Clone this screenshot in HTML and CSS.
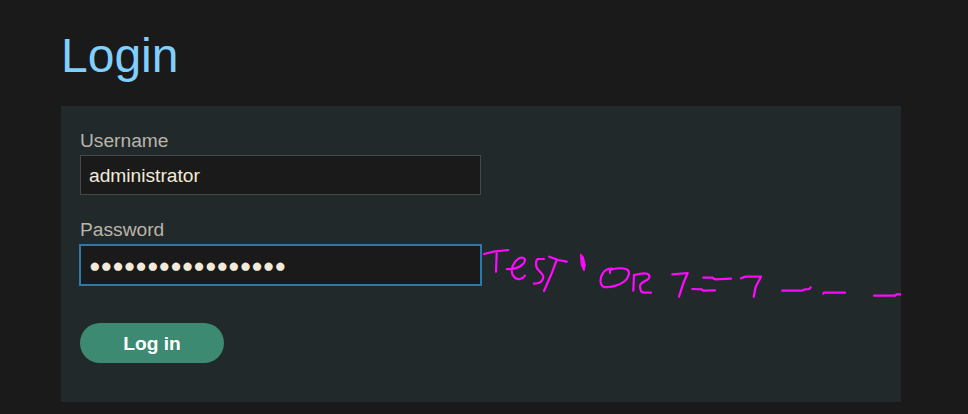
FILE: index.html
```html
<!DOCTYPE html>
<html lang="en">

<head>
    <meta charset="UTF-8">
    <meta name="viewport" content="width=device-width, initial-scale=1.0">
    <title>Login</title>
    <link rel="stylesheet" href="styles.css">
</head>

<body>
    <div class="container">
        <h1>Login</h1>
        <div class="login-box">
            <form id="login-form">
                <div class="field">
                    <label for="username">Username</label>
                    <input type="text" id="username" value="administrator">
                </div>
                <div class="field">
                    <label for="password">Password</label>
                    <input type="text" id="password" class="focused" value="●●●●●●●●●●●●●●●●●">
                </div>
                <div class="button-container">
                    <button type="button">Log in</button>
                </div>
            </form>

            <!-- handwriting on top of the form, drawn in page coordinates -->
            <svg class="scribble" viewBox="61 106 840 296" width="840" height="296" fill="none">
                <!-- T -->
                <path d="M484 254L493.3 251.7L508.3 250"/>
                <path d="M496.7 253.3L496 271.7"/>
                <!-- e -->
                <path d="M506.7 269C512 269.5 518 268 522 265C526 262 526 258 522 257.5C517 257.5 512 265 511.7 270C511.5 276 516 280 520 279C522.5 278.5 524 277 525 275.7"/>
                <!-- S -->
                <path d="M544 259L537.5 259C535.5 261 535.5 266 537.5 269C540 272 543.5 275 543.3 277C543 281 541 283.7 534 283.7"/>
                <!-- T -->
                <path d="M549.3 256.7L558.3 260L566.7 261.7"/>
                <path d="M556.7 260L551.7 273.3L544 291"/>
                <!-- quote -->
                <path class="blob" d="M580.7 254.3L583.3 256.7L585.3 265L584 271L581.3 265Z"/>
                <!-- O -->
                <path d="M610 273L610 270C616 267.5 624 268 627 269.5C631 272 628 278 625 281C620 285 610 288 604 287C599 285 600 277 603 273C605 270 609 268.5 612 268.5"/>
                <!-- R -->
                <path d="M634 275L633.3 290.7"/>
                <path d="M634 275C638 274 643 273 646 273.5C651 274.5 650 278 647 280C643 282 640 283 640 286C640 289 640.5 292.5 644 292.7L651 292.7"/>
                <!-- 7 = 7 -->
                <path d="M672.3 274.3L687.7 273L683.3 283.3L679 296.7"/>
                <path d="M703.3 277.7L712.3 277.7L715 279.3L731 278.7"/>
                <path d="M692.3 289L701.7 289.3L703.3 290.7L715 290.3"/>
                <path d="M741 278.3L745 276.7L761 276.7L755.7 286.7L753.7 296.7"/>
                <!-- dashes -->
                <path d="M782.3 290.7L801.7 290.7L805 289.3L809.3 289L810.7 287.3"/>
                <path d="M823.3 293.7L824 292.7L845 292.7"/>
                <path d="M874 295.7L895 295.7L896.7 294.3L900.7 294.3"/>
            </svg>
        </div>
    </div>
</body>

</html>
```

FILE: styles.css
```css
*{
    box-sizing: border-box;
    padding: 0;
    margin: 0;
}

body{
    background-color: #1a1a1a;
    font-family: "Liberation Sans", Arial, sans-serif;
}

.container{
    padding: 28px 67px 0 61px;
}

h1{
    font-size: 48px;
    font-weight: normal;
    line-height: 55px;
    margin-bottom: 23px;
    color: #80cfff;
}

.login-box{
    position: relative;
    height: 296px;
    padding: 24px 19px;
    background-color: #22292b;
}

.field{
    display: flex;
    flex-direction: column;
    gap: 3.4px;
    margin-bottom: 24px;
}

.field label{
    font-size: 19.2px;
    line-height: 22px;
    color: #b9b5a9;
}

.field input{
    width: 401px;
    height: 40px;
    padding: 2px 8px 0;
    font-family: inherit;
    font-size: 19.2px;
    color: #f3ead9;
    background-color: #1a1a1a;
    border: 1px solid #45494a;
    outline: none;
}

.field input.focused{
    border-color: #2a7ab0;
    box-shadow: 0 0 0 1px #2a7ab0;
}

.button-container{
    padding-top: 14px;
}

.button-container button{
    width: 144px;
    height: 40px;
    padding-top: 2px;
    border: none;
    border-radius: 20px;
    background-color: #3c8a72;
    color: white;
    font-family: inherit;
    font-size: 19.2px;
    font-weight: bold;
}

.scribble{
    position: absolute;
    left: 0;
    top: 0;
    pointer-events: none;
}

.scribble path{
    stroke: #ff0aff;
    stroke-width: 2.2;
    stroke-linecap: round;
    stroke-linejoin: round;
}

.scribble path.blob{
    fill: #ff0aff;
    stroke-width: 1;
}
```
